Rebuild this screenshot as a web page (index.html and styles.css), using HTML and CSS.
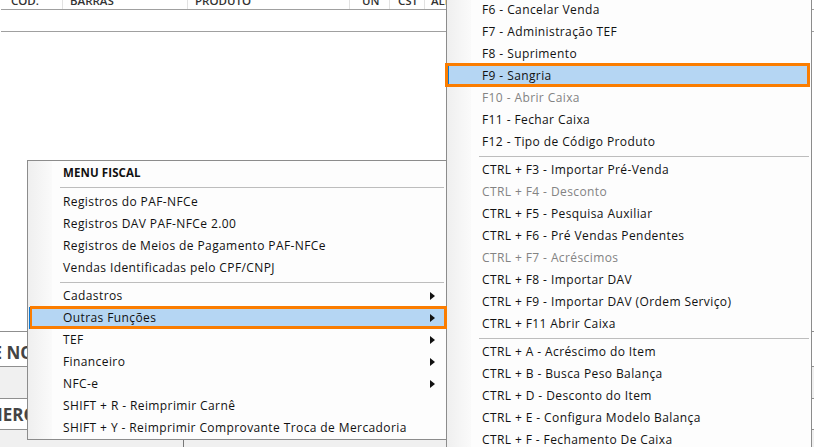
FILE: index.html
```html
<!DOCTYPE html>
<html lang="pt-BR">
<head>
<meta charset="utf-8">
<title>PDV</title>
<link rel="stylesheet" href="styles.css">
</head>
<body>
<main class="screen">
  <div class="grid-head">
    <span class="col c1">CÓD.</span>
    <span class="col c2">BARRAS</span>
    <span class="col c3">PRODUTO</span>
    <span class="col c4">UN</span>
    <span class="col c5">CST</span>
    <span class="col c6">ALÍQ</span>
  </div>
  <div class="grid-row"></div>
  <div class="grid-empty"></div>
  <section class="panel">
    <div class="panel-title">DE NOTA</div>
    <div class="panel-blank"></div>
    <div class="panel-title second">NUMERO</div>
    <div class="panel-foot"><span class="foot-cell"></span></div>
  </section>
</main>

<ul class="menu menu-left">
  <li class="item title">MENU FISCAL</li>
  <li class="sep"></li>
  <li class="item">Registros do PAF-NFCe</li>
  <li class="item">Registros DAV PAF-NFCe 2.00</li>
  <li class="item">Registros de Meios de Pagamento PAF-NFCe</li>
  <li class="item">Vendas Identificadas pelo CPF/CNPJ</li>
  <li class="sep"></li>
  <li class="item sub">Cadastros</li>
  <li class="item sub active">Outras Funções</li>
  <li class="item sub">TEF</li>
  <li class="item sub">Financeiro</li>
  <li class="item sub">NFC-e</li>
  <li class="item">SHIFT + R - Reimprimir Carnê</li>
  <li class="item">SHIFT + Y - Reimprimir Comprovante Troca de Mercadoria</li>
</ul>

<ul class="menu menu-right">
  <li class="item">F6 - Cancelar Venda</li>
  <li class="item">F7 - Administração TEF</li>
  <li class="item">F8 - Suprimento</li>
  <li class="item active">F9 - Sangria</li>
  <li class="item off">F10 - Abrir Caixa</li>
  <li class="item">F11 - Fechar Caixa</li>
  <li class="item">F12 - Tipo de Código Produto</li>
  <li class="sep"></li>
  <li class="item">CTRL + F3 - Importar Pré-Venda</li>
  <li class="item off">CTRL + F4 - Desconto</li>
  <li class="item">CTRL + F5 - Pesquisa Auxiliar</li>
  <li class="item">CTRL + F6 - Pré Vendas Pendentes</li>
  <li class="item off">CTRL + F7 - Acréscimos</li>
  <li class="item">CTRL + F8 - Importar DAV</li>
  <li class="item">CTRL + F9 - Importar DAV (Ordem Serviço)</li>
  <li class="item">CTRL + F11 Abrir Caixa</li>
  <li class="sep"></li>
  <li class="item">CTRL + A - Acréscimo do Item</li>
  <li class="item">CTRL + B - Busca Peso Balança</li>
  <li class="item">CTRL + D - Desconto do Item</li>
  <li class="item">CTRL + E - Configura Modelo Balança</li>
  <li class="item">CTRL + F - Fechamento De Caixa</li>
</ul>
</body>
</html>
```
FILE: styles.css
```css
html, body {
  margin: 0;
  height: 447px;
  overflow: hidden;
  background: #fff;
}
body {
  position: relative;
  width: 814px;
  font-family: "Open Sans", "Noto Sans", sans-serif;
  font-size: 12px;
  color: #111;
}
.screen {
  display: flex;
  flex-direction: column;
  height: 447px;
  padding-left: 1px;
  box-sizing: border-box;
}
.grid-head {
  display: flex;
  height: 10px;
  box-sizing: border-box;
  border-bottom: 1px solid #a0a0a0;
  overflow: hidden;
  flex: none;
}
.col {
  box-sizing: border-box;
  border-right: 1px solid #e2e2e2;
  padding-left: 10px;
  line-height: 2px;
  height: 9px;
  font-size: 11.5px;
  font-weight: 600;
  color: #333;
  flex: none;
  white-space: nowrap;
  overflow: hidden;
}
.c1 { width: 62px; }
.c2 { width: 125px; padding-left: 7px; }
.c3 { width: 162px; padding-left: 7px; }
.c4 { width: 40px; padding-left: 12px; }
.c5 { width: 35px; padding-left: 8px; }
.c6 { width: 60px; padding-left: 6px; border-right: 0; }
.grid-row {
  height: 22px;
  box-sizing: border-box;
  border-bottom: 1px solid #a0a0a0;
  flex: none;
}
.grid-empty { height: 299px; flex: none; }
.panel { flex: 1; background: #fff; border-top: 1px solid #8f8f8f; margin-left: -1px; }
.panel-title {
  height: 35px;
  box-sizing: border-box;
  border-bottom: 1px solid #8f8f8f;
  font-size: 17px;
  font-weight: 700;
  line-height: 41px;
  color: #444;
  white-space: nowrap;
  text-indent: -20px;
  overflow: hidden;
}
.panel-blank {
  height: 32px;
  box-sizing: border-box;
  border-bottom: 1px solid #8f8f8f;
  background: #f0f0f0;
}
.panel-title.second {
  height: 31px;
  line-height: 31px;
  text-indent: -40px;
}
.panel-foot { height: 18px; display: flex; background: #f0f0f0; }
.foot-cell { width: 183px; border-right: 1px solid #777; }

.menu {
  list-style: none;
  margin: 0;
  padding: 0;
  position: absolute;
  box-sizing: border-box;
  border: 1px solid #8c8c8c;
  background: linear-gradient(to right, #efefef, #fafafa 24px, #fdfdfd 24px);
  letter-spacing: 0.4px;
}
.menu-left { left: 27px; top: 160px; width: 420px; height: 280px; padding-top: 1px; }
.menu-right { left: 446px; top: -3px; width: 366px; height: 470px; padding-top: 1px; }
.item {
  height: 22px;
  line-height: 22px;
  padding-left: 35px;
  position: relative;
  white-space: nowrap;
}
.title { font-weight: 700; font-size: 11.5px; letter-spacing: 0.1px; }
.sep {
  height: 1px;
  margin: 3px 2px 2px 32px;
  background: #bdbdbd;
}
.title + .sep { margin-top: 3px; margin-bottom: 3px; }
.off { color: #838383; }
.active {
  background: #b5d6f3;
  border-left: 1px solid #0a78d4;
  padding-left: 33px;
  margin-left: 1px;
  z-index: 1;
}
.active::before {
  content: "";
  position: absolute;
  box-sizing: border-box;
  border: 3px solid #fb7d00;
  pointer-events: none;
}
.menu-left .active::before {
  left: 0;
  right: -1px;
  top: -1px;
  bottom: 0;
  border-left-width: 2px;
}
.menu-right .active {
  margin-right: 1px;
}
.menu-right .active::before {
  left: -4px;
  right: 0;
  top: -2px;
  bottom: 0;
}
.sub::after {
  content: "";
  position: absolute;
  right: 11px;
  top: 7px;
  border-left: 5px solid #111;
  border-top: 4px solid transparent;
  border-bottom: 4px solid transparent;
}
```
